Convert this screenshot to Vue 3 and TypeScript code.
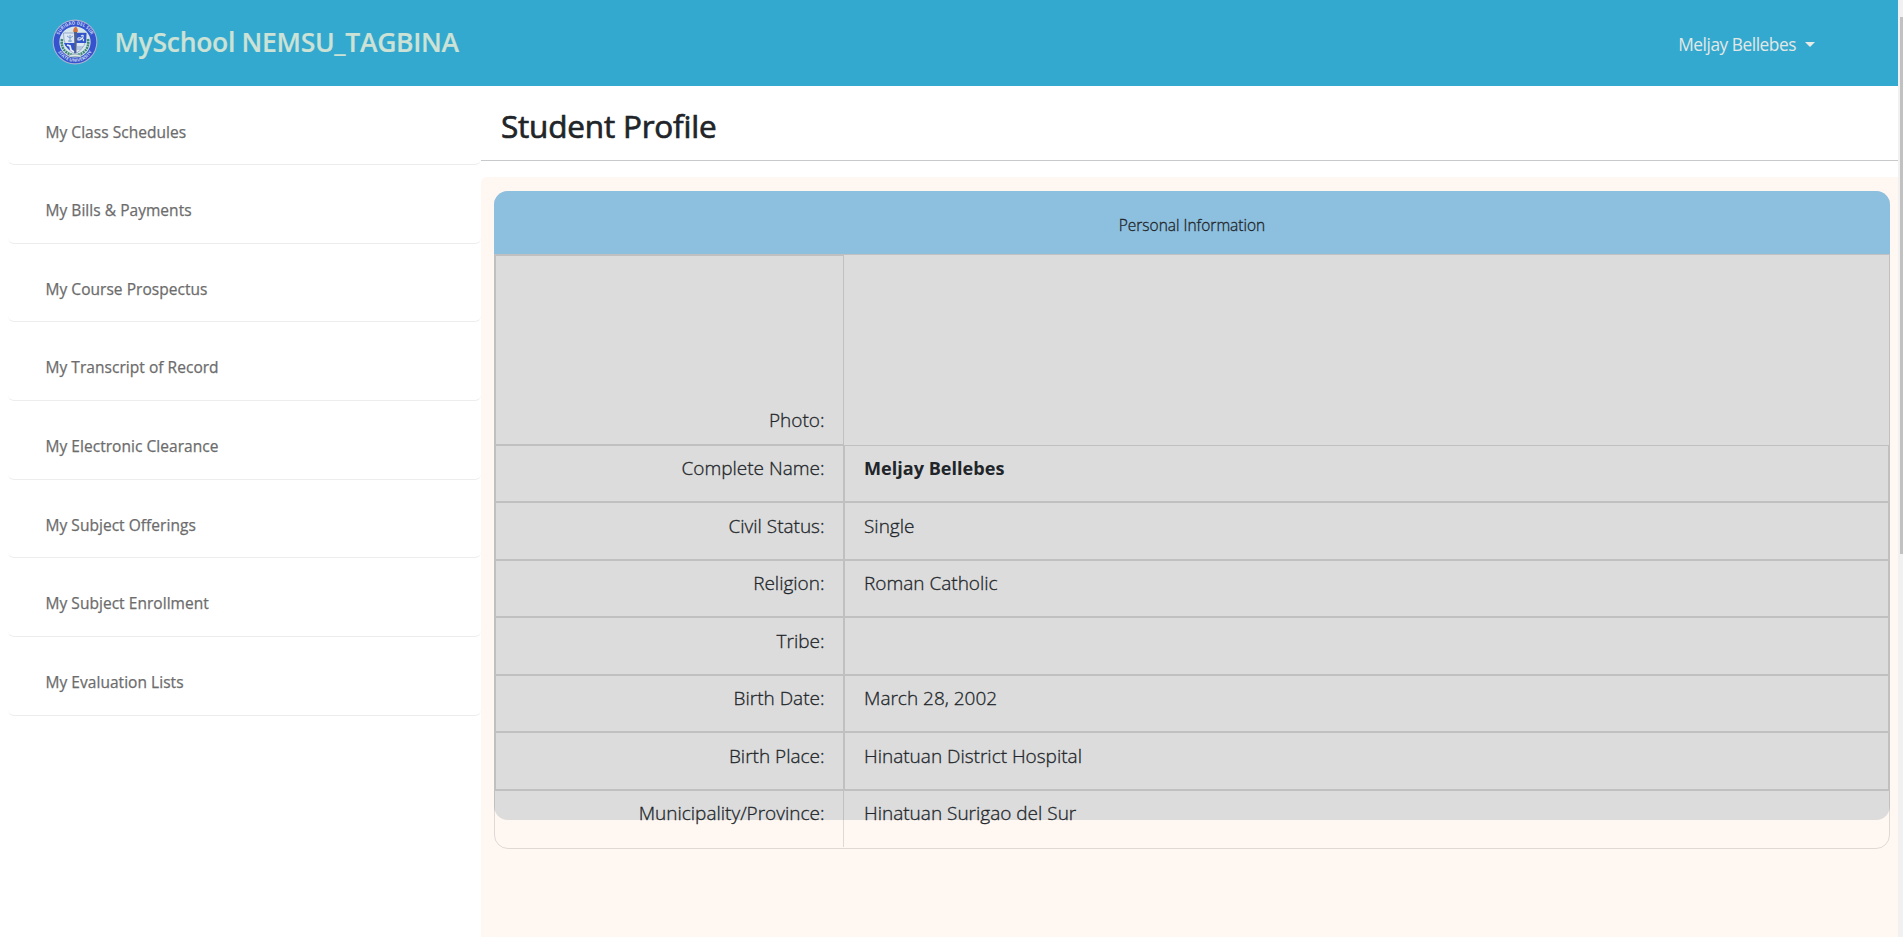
<script setup lang="ts">
const links: string[] = [
  'My Class Schedules',
  'My Bills & Payments',
  'My Course Prospectus',
  'My Transcript of Record',
  'My Electronic Clearance',
  'My Subject Offerings',
  'My Subject Enrollment',
  'My Evaluation Lists',
]

interface Field {
  label: string
  value: string
  strong?: boolean
}

const fields: Field[] = [
  { label: 'Complete Name:', value: 'Meljay Bellebes', strong: true },
  { label: 'Civil Status:', value: 'Single' },
  { label: 'Religion:', value: 'Roman Catholic' },
  { label: 'Tribe:', value: '' },
  { label: 'Birth Date:', value: 'March 28, 2002' },
  { label: 'Birth Place:', value: 'Hinatuan District Hospital' },
  { label: 'Municipality/Province:', value: 'Hinatuan Surigao del Sur' },
]
</script>

<template>
  <div class="page">
    <div class="app">
      <header class="navbar">
        <a class="brand">
          <svg class="seal" viewBox="0 0 46 46" aria-hidden="true">
            <defs>
              <path id="seal-top" d="M6.2 27.5A17.4 17.4 0 1 1 39.8 27.5" />
              <path id="seal-bottom" d="M5.2 31.5A19.7 19.7 0 0 0 40.8 31.5" />
            </defs>
            <circle cx="23" cy="23" r="22.4" fill="#a9b4d2" />
            <circle cx="23" cy="23" r="21.3" fill="#3552cf" />
            <circle cx="23" cy="23" r="15.6" fill="#d5e6ec" />
            <text class="seal-text"><textPath href="#seal-top" startOffset="50%" text-anchor="middle">SURIGAO DEL SUR</textPath></text>
            <text class="seal-text"><textPath href="#seal-bottom" startOffset="50%" text-anchor="middle">STATE UNIVERSITY</textPath></text>
            <path d="M10 20Q8 32 20 36M36 20Q38 32 26 36" fill="none" stroke="#408875" stroke-width="2.6" stroke-dasharray="2 .7" />
            <path d="M11.5 14H34.5Q35 29 23 35Q11 29 11.5 14Z" fill="#dce9f4" stroke="#8094bb" stroke-width=".7" />
            <path d="M23 14H34.2V24H23ZM12 24H23V34Q14 30 12 24Z" fill="#3454cb" />
            <path d="M15 17l3 2 3-2M18 16v7M16 22h4" fill="none" stroke="#7b9ec8" />
            <path d="M29 17q3-2 2 1t-5 3q-1-3 3-2t2 3" fill="none" stroke="#dce9f4" stroke-width="1.1" />
            <path d="M15 26l3 1 1 4 3 2" fill="none" stroke="#e5eef5" stroke-width="1.8" />
            <path d="M25 28h6M25 30h4" stroke="#8ca5c9" />
            <path d="M22 13h3l-.6 21h-1.8z" fill="#50628b" />
            <path d="M21.4 13Q20.5 10 23.7 7.5Q26.7 10 25.5 13Z" fill="#d4733c" />
            <path d="M17 36q6-2 12 0v2.4q-6-2-12 0z" fill="#dfe8e7" stroke="#577e8c" stroke-width=".5" />
          </svg>
          <span class="brand-name">MySchool NEMSU_TAGBINA</span>
        </a>
        <a class="user"><span>Meljay Bellebes</span><i class="caret"></i></a>
      </header>

      <div class="body">
        <nav class="sidebar">
          <a v-for="link in links" :key="link" class="link">{{ link }}</a>
        </nav>

        <main class="main">
          <h2 class="title">Student Profile</h2>
          <div class="panel">
            <section class="card">
              <div class="card-head">Personal Information</div>
              <div class="table">
                <div class="row photo">
                  <div class="label">Photo:</div>
                  <div class="value"></div>
                </div>
                <div v-for="field in fields" :key="field.label" class="row">
                  <div class="label">{{ field.label }}</div>
                  <div class="value" :class="{ strong: field.strong }">{{ field.value }}</div>
                </div>
              </div>
            </section>
          </div>
        </main>
      </div>
    </div>
    <div class="scrollbar"><div class="thumb"></div></div>
  </div>
</template>

<style>
body {
  margin: 0;
  overflow: hidden;
}
</style>

<style scoped>
* {
  box-sizing: border-box;
}
.page {
  display: flex;
  width: 1903px;
  height: 937px;
  overflow: hidden;
  background: #fff;
  color: #212529;
  font-family: "Open Sans", "Noto Sans", sans-serif;
}
.app {
  width: 1898px;
}
.scrollbar {
  width: 5px;
  padding: 17px 0 0 2px;
  background: #f1f1f1;
}
.thumb {
  height: 537px;
  background: #c1c1c1;
}
.navbar {
  display: flex;
  align-items: center;
  justify-content: space-between;
  height: 86px;
  padding: 0 83px 2px 52px;
  background: #33a9cf;
}
.brand {
  display: flex;
  align-items: center;
}
.seal {
  width: 46px;
  height: 46px;
}
.seal-text {
  fill: #c9d7ef;
  font-size: 4.5px;
  font-weight: 700;
}
.brand-name {
  margin-left: 16.5px;
  color: #cce2d6;
  font-size: 26.5px;
  font-weight: 600;
  line-height: 40px;
  letter-spacing: -0.3px;
  white-space: nowrap;
  -webkit-text-stroke: 0.2px currentColor;
}
.user {
  display: flex;
  align-items: center;
  margin-top: 4px;
  color: #e3e8e6;
  font-size: 17.3px;
  letter-spacing: -0.45px;
  white-space: nowrap;
}
.caret {
  margin-left: 9px;
  border: 5.5px solid transparent;
  border-top-color: #e9ebe6;
  border-bottom: 0;
}
.body {
  display: flex;
  height: 851px;
}
.sidebar {
  width: 481px;
  padding: 0.5px 0 0 8px;
}
.link {
  display: block;
  height: 78.67px;
  padding: 33px 37.5px 0;
  border-bottom: 1px solid #ededed;
  border-radius: 6px;
  color: #6c6c6c;
  font-size: 15.5px;
  font-weight: 500;
  line-height: 24px;
  letter-spacing: 0.04px;
  -webkit-text-stroke: 0.25px currentColor;
}
.main {
  width: 1417px;
}
.title {
  height: 75px;
  margin: 0 0 16px;
  padding: 20px 20px 0;
  border-bottom: 1px solid #c8c9ca;
  font-size: 31.5px;
  font-weight: 500;
  line-height: 40px;
  letter-spacing: -0.2px;
  -webkit-text-stroke: 0.7px currentColor;
}
.panel {
  height: 760px;
  padding: 14px 8px 0 13px;
  border-radius: 6px 0 0 0;
  background: #fff7f2;
}
.card {
  height: 629px;
  border-radius: 14px;
  background: #dcdcdc;
}
.card-head {
  height: 63px;
  border-radius: 14px 14px 0 0;
  background: #8dbfde;
  font-size: 15.5px;
  font-weight: 300;
  line-height: 68px;
  text-align: center;
  -webkit-text-stroke: 0.3px currentColor;
}
.table {
  height: 595px;
  border: 1px solid rgba(0, 0, 0, 0.125);
  border-radius: 0 0 14px 14px;
  font-size: 19px;
  font-weight: 300;
  line-height: 28px;
  -webkit-text-stroke: 0.3px currentColor;
}
.row {
  display: grid;
  grid-template-columns: 349px 1fr;
  height: 57.5px;
}
.label,
.value {
  border: 1px solid rgba(0, 0, 0, 0.125);
  white-space: nowrap;
}
.label {
  padding: 8.6px 18.5px 0 0;
  text-align: right;
}
.value {
  padding: 8.6px 0 0 19px;
}
.strong {
  font-size: 18.1px;
  font-weight: 700;
  -webkit-text-stroke: 0;
}
.photo {
  height: 189.6px;
}
.photo .label {
  padding-top: 150px;
}
.photo .value {
  border: 0;
}
.row:last-child .label {
  border-width: 1px 1px 0 0;
}
.row:last-child .value {
  border-width: 1px 0 0;
  padding-left: 20px;
}
</style>
